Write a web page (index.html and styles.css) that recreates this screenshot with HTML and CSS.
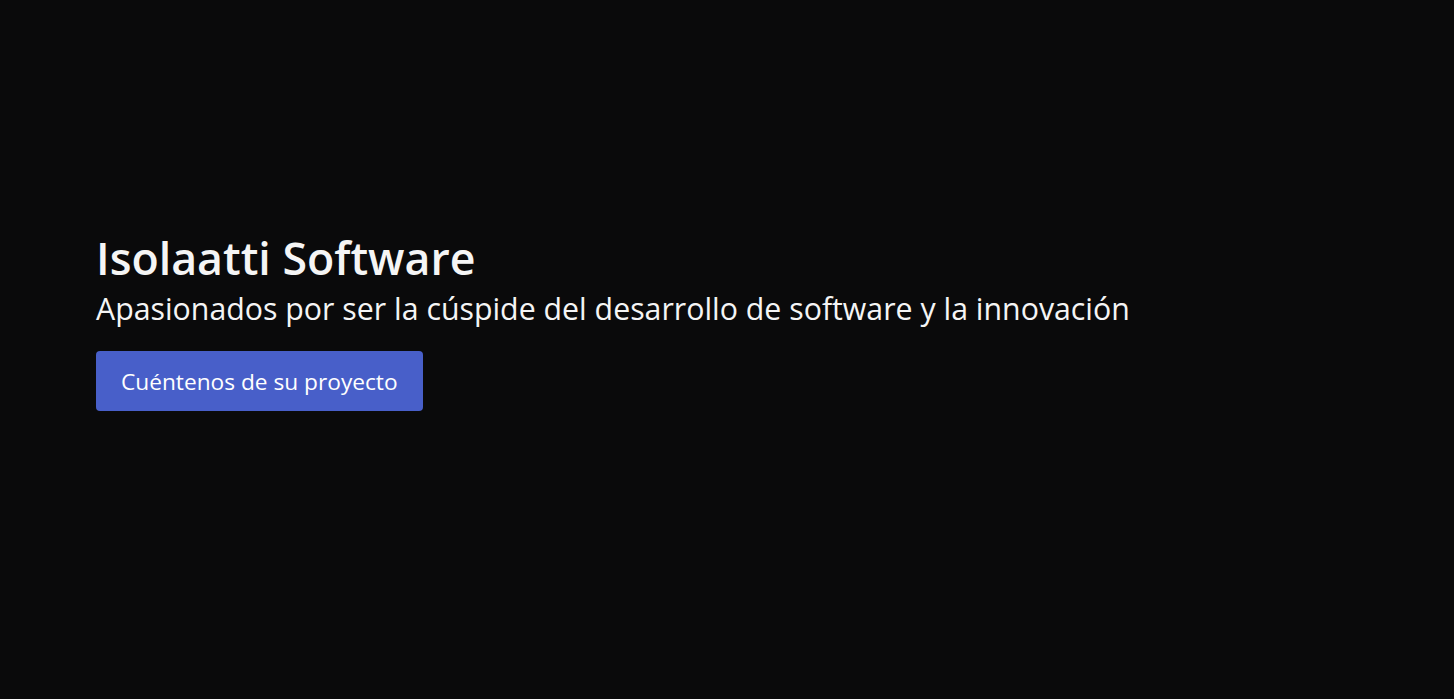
FILE: index.html
```html
<!DOCTYPE html>
<html lang="es">
<head>
<meta charset="utf-8">
<title>Isolaatti Software</title>
<link rel="stylesheet" href="styles.css">
</head>
<body>
<main class="hero">
  <h1 class="hero-title">Isolaatti Software</h1>
  <p class="hero-lead">Apasionados por ser la cúspide del desarrollo de software y la innovación</p>
  <a class="hero-btn" href="#">Cuéntenos de su proyecto</a>
</main>
</body>
</html>
```
FILE: styles.css
```css
html, body {
  margin: 0;
  padding: 0;
  background: #0a0a0b;
  height: 100%;
}
body {
  font-family: "Open Sans", "Noto Sans", sans-serif;
  color: #f5f5f5;
}
.hero {
  display: flex;
  flex-direction: column;
  align-items: flex-start;
  padding: 231px 96px 0;
  box-sizing: border-box;
}
.hero-title {
  margin: 0;
  font-size: 44.7px;
  font-weight: 600;
  line-height: 54px;
  color: #f5f5f5;
}
.hero-lead {
  margin: 1px 0 19px;
  font-size: 30.3px;
  font-weight: 400;
  line-height: 46px;
}
.hero-btn {
  display: inline-block;
  background: #485fc9;
  color: #fff;
  text-decoration: none;
  font-size: 22.7px;
  line-height: 31px;
  padding: 15px 25px 14px;
  border-radius: 4px;
}
```
